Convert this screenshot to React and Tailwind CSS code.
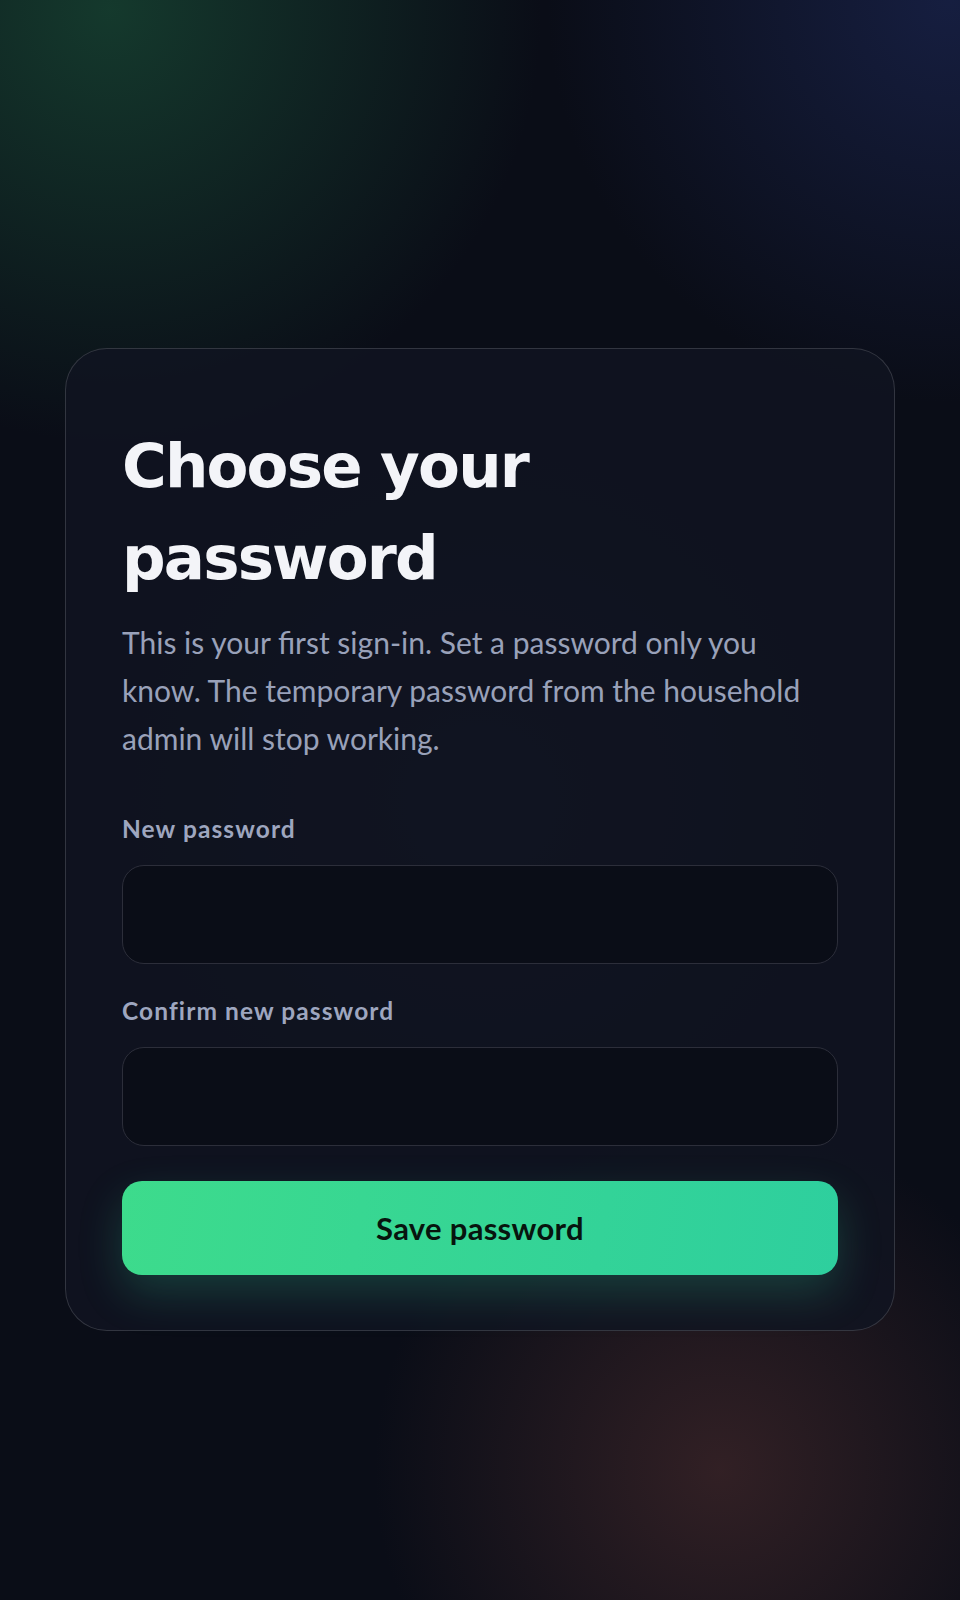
import { useState } from "react";

const Field = ({ label, id, value, onChange, className = "" }) => (
  <div className={className}>
    <label
      htmlFor={id}
      className="block text-[24.5px] leading-[36px] font-bold tracking-[0.045em] text-[#9ea6bf]"
    >
      {label}
    </label>
    <input
      id={id}
      type="password"
      value={value}
      onChange={(e) => onChange(e.target.value)}
      className="mt-[18px] block h-[99px] w-full rounded-[22px] border border-[#2c2e3a] bg-[#0a0d17] px-6 text-[30px] text-white outline-none"
    />
  </div>
);

const App = () => {
  const [password, setPassword] = useState("");
  const [confirm, setConfirm] = useState("");

  return (
    <main className="min-h-[1600px] w-full bg-[#0a0d17] bg-[radial-gradient(600px_circle_at_110px_10px,rgba(24,72,52,0.75),transparent_72%),radial-gradient(560px_circle_at_950px_0px,rgba(26,36,78,0.75),transparent_72%),radial-gradient(480px_circle_at_720px_1470px,rgba(54,34,38,0.9),transparent_72%),radial-gradient(500px_circle_at_480px_800px,rgba(24,28,44,0.6),transparent_70%)] pt-[348px] font-['Lato',sans-serif]">
      <div className="mx-auto w-[830px] rounded-[42px] border border-white/15 bg-[#111421]/85 px-14 pt-[71px] pb-[55px]">
        <h1 className="font-['DejaVu_Sans',sans-serif] text-[61px] leading-[92px] font-bold tracking-[-0.03em] text-[#f3f4f8]">
          Choose your password
        </h1>
        <p className="mt-[14px] text-[30px] leading-[48px] text-[#99a1b9]">
          This is your first sign-in. Set a password only you know. The
          temporary password from the household admin will stop working.
        </p>

        <form onSubmit={(e) => e.preventDefault()}>
          <Field
            className="mt-[49px]"
            id="new-password"
            label="New password"
            value={password}
            onChange={setPassword}
          />
          <Field
            className="mt-[29px]"
            id="confirm-password"
            label="Confirm new password"
            value={confirm}
            onChange={setConfirm}
          />
          <button
            type="submit"
            className="mt-[35px] flex h-[94px] w-full items-center justify-center rounded-[20px] bg-[linear-gradient(100deg,#3ddb8c,#2ecf9e)] text-[31px] font-bold tracking-[0.01em] text-[#07140e] shadow-[0_18px_44px_rgba(52,211,153,0.22)]"
          >
            Save password
          </button>
        </form>
      </div>
    </main>
  );
};

export default App;
